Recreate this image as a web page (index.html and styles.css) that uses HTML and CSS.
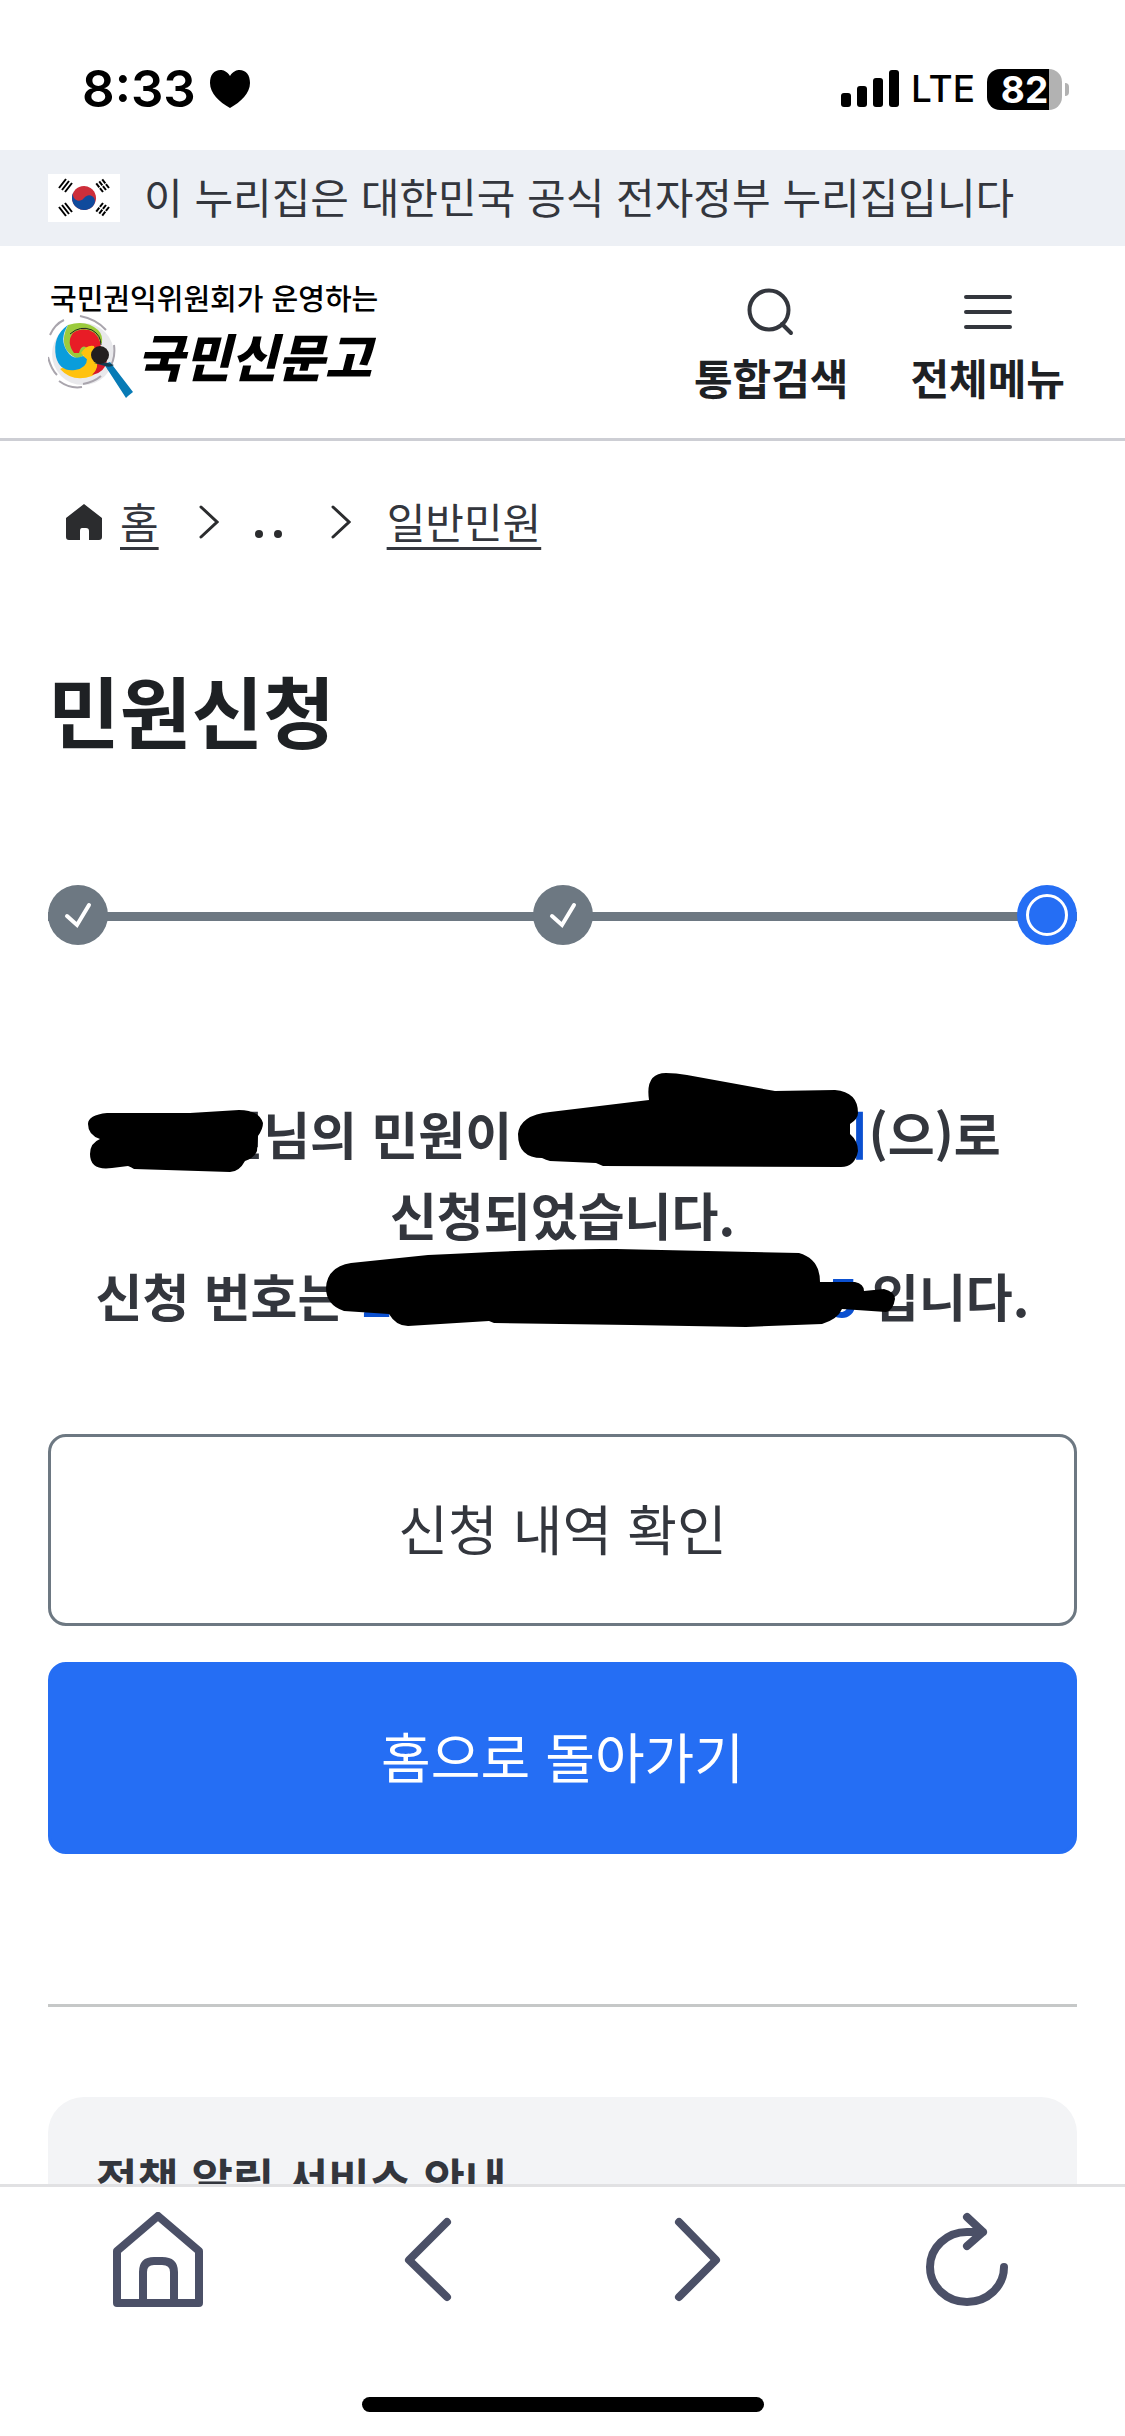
FILE: index.html
```html
<!DOCTYPE html>
<html lang="ko">
<head>
  <meta charset="utf-8">
  <meta name="viewport" content="width=device-width, initial-scale=1">
  <title>민원신청</title>
  <link rel="stylesheet" href="styles.css">
</head>
<body>
  <div class="status">
    <div class="status-left">
      <span class="time">8:33</span>
      <svg width="40" height="38" viewBox="0 0 40 38"><path d="M20 6C17 1 13 0 10.500 0C4 0 0 5 0 13C0 23 9 32 20 38C31 32 40 23 40 13C40 5 36 0 29.500 0C27 0 23 1 20 6Z"/></svg>
    </div>
    <div class="status-right">
      <svg width="58" height="38" viewBox="0 0 58 38">
        <rect x="0" y="23" width="10" height="14" rx="3"/>
        <rect x="16" y="16" width="10" height="21" rx="3"/>
        <rect x="32" y="8" width="10" height="29" rx="3"/>
        <rect x="48" y="0" width="10" height="37" rx="3"/>
      </svg>
      <span class="network">LTE</span>
      <div class="battery"><span>82</span></div>
    </div>
  </div>

  <div class="gov-banner">
    <svg width="72" height="48" viewBox="0 0 72 48">
      <rect width="72" height="48" fill="#fff"/>
      <g transform="rotate(33 36 24)">
        <circle cx="36" cy="24" r="12" fill="#cd2e3a"/>
        <path d="M24 24a6 6 0 0 0 12 0a6 6 0 0 1 12 0a12 12 0 0 1 -24 0Z" fill="#0f4a9c"/>
      </g>
      <g stroke="#000" stroke-width="2">
        <path d="M11 14L18 5M14 16L21 7M17 18L24 9"/>
        <path d="M61 14L54 5M58 16L51 7M55 18L48 9" stroke-dasharray="5 1"/>
        <path d="M11 33L18 42M14 31L21 40M17 29L24 38"/>
        <path d="M61 33L54 42M58 31L51 40M55 29L48 38" stroke-dasharray="5 1"/>
      </g>
    </svg>
    <span>이 누리집은 대한민국 공식 전자정부 누리집입니다</span>
  </div>

  <header class="header">
    <a class="logo" href="#">
      <span class="logo-sub">국민권익위원회가 운영하는</span>
      <span class="logo-main">
        <svg width="86" height="86" viewBox="0 0 86 86">
          <circle cx="35" cy="39" r="31" fill="#e9e9ec"/>
          <g fill="none" stroke="#a9a5ad" stroke-width="2">
            <path d="M32 1Q48 4 58 15M2 20Q7 9 16 5M0 42Q3 54 9 60M11 66Q22 74 34 72M66 30Q68 45 60 55M35 69Q46 67 53 61"/>
          </g>
          <path d="M12 54Q25 68 44 61Q50 58 50 48L44 34L32 44Z" fill="#ffc20e"/>
          <path d="M44 60Q58 57 59 44L48 42Q52 53 44 60Z" fill="#d7182a"/>
          <path d="M20 10Q38 4 50 15Q55 20 54 28L30 44Q8 34 20 10Z" fill="#9bcb3c"/>
          <path d="M20 10Q4 21 8 42Q12 57 27 55Q39 53 39 44L35 41Q25 46 19 36Q11 24 20 10Z" fill="#0a9ddb"/>
          <path d="M26 38Q18 27 25 18Q31 13 41 15Q52 19 53 33L42 36Q34 26 31 38Z" fill="#e81c26"/>
          <path d="M33 38Q39 29 46 31L50 48Q42 52 39 44Z" fill="#ffc20e"/>
          <path d="M22 19Q32 10 44 15Q53 20 53 30" fill="none" stroke="#222" stroke-width="1"/>
          <path d="M56 49L62 47L85 77L80 81L78 83Z" fill="#087bb6"/>
          <path d="M46 48Q54 45 66 50Q62 53 57 51Z" fill="#123c52"/>
          <circle cx="52" cy="40" r="9" fill="#231f20"/>
        </svg>
        <span class="logo-name">국민신문고</span>
      </span>
    </a>
    <nav class="header-menu">
      <button type="button">
        <svg width="48" height="48" viewBox="0 0 48 48"><circle cx="22" cy="22" r="19.500"/><path d="M35 36L44 45"/></svg>
        통합검색
      </button>
      <button type="button">
        <svg width="48" height="48" viewBox="0 0 48 48"><path d="M2 9H46M2 24H46M2 39H46"/></svg>
        전체메뉴
      </button>
    </nav>
  </header>

  <main class="content">
    <nav class="breadcrumb">
      <svg class="home" width="36" height="36" viewBox="0 0 36 36"><path d="M18 0L36 14V33Q36 36 33 36H23V27Q23 24 20 24H16Q14 24 14 27V36H3Q0 36 0 33V14Z"/></svg>
      <a href="#">홈</a>
      <svg class="arrow" width="20" height="34" viewBox="0 0 20 34"><path d="M2 2L18 17L2 32"/></svg>
      <svg class="dots" width="28" height="34" viewBox="0 0 28 34"><circle cx="4" cy="29" r="4"/><circle cx="23" cy="29" r="4"/></svg>
      <svg class="arrow" width="20" height="34" viewBox="0 0 20 34"><path d="M2 2L18 17L2 32"/></svg>
      <a href="#">일반민원</a>
    </nav>

    <h1>민원신청</h1>

    <ol class="steps">
      <li class="done"><svg width="60" height="60" viewBox="0 0 60 60"><path d="M19 31L29 40L41 20"/></svg></li>
      <li class="done"><svg width="60" height="60" viewBox="0 0 60 60"><path d="M19 31L29 40L41 20"/></svg></li>
      <li class="current"><svg width="60" height="60" viewBox="0 0 60 60"><circle cx="30" cy="30" r="19.500"/></svg></li>
    </ol>

    <div class="message">
      <p>
        <span class="masked name">선<svg width="139" height="81" viewBox="0 0 139 81"><path d="M-17 16H66L115 13Q135 13 139 26Q139 32 134 39L133 54Q131 60 121 64Q115 75 106 75L10 72Q7 70 4 69L-12 71Q-34 74 -34 57Q-34 46 -24 42Q-36 38 -36 27Q-36 18 -17 16Z"/></svg></span><span>님의 민원이&nbsp;</span><span class="masked agency">기<svg width="342" height="81" viewBox="0 0 342 81"><path d="M-8 37Q-6 18 24 15L123 3Q119 -24 140 -24Q150 -24 161 -22L249 -6L309 -7Q332 -5 332 16Q332 22 324 27V37Q332 44 332 54Q329 70 315 70L77 69L70 66L24 64Q20 63 16 61Q-8 61 -8 37Z"/></svg></span><span>(으)로</span>
      </p>
      <p>신청되었습니다.</p>
      <p>
        <span>신청 번호는&nbsp;</span><span class="masked number"><span>2</span><span>5</span><svg width="496" height="81" viewBox="0 0 496 81"><path d="M-36 29Q-35 8 -11 4L66 -4Q200 -11 254 -10L437 -6Q458 0 458 23L493 23Q502 25 502 32L522 30Q533 33 533 40Q531 52 524 53L480 50Q476 60 460 65L384 68L269 66L132 64L127 62L46 67Q34 67 27 55L-18 52Q-36 46 -36 29Z"/></svg></span><span>&nbsp;입니다.</span>
      </p>
    </div>

    <div class="actions">
      <button type="button" class="btn">신청 내역 확인</button>
      <button type="button" class="btn primary">홈으로 돌아가기</button>
    </div>

    <hr>

    <section class="notice">
      <h2>정책 알림 서비스 안내</h2>
    </section>
  </main>

  <footer class="toolbar">
    <div class="toolbar-buttons">
      <button type="button" aria-label="홈"><svg width="96" height="96" viewBox="0 0 96 96"><path d="M7 39L48 4L89 39V91H7ZM33 90V60Q33 49 44 49H52Q64 49 64 60V90"/></svg></button>
      <button type="button" aria-label="뒤로"><svg width="96" height="96" viewBox="0 0 96 96"><path d="M67 10L29 48L67 85"/></svg></button>
      <button type="button" aria-label="앞으로"><svg width="96" height="96" viewBox="0 0 96 96"><path d="M30 10L67 48L30 85"/></svg></button>
      <button type="button" aria-label="새로고침"><svg width="96" height="96" viewBox="0 0 96 96"><path d="M85 55A37 35 0 1 1 48 20H64M48 5L64 20L48 34"/></svg></button>
    </div>
    <div class="home-indicator"></div>
  </footer>
</body>
</html>
```
FILE: styles.css
```css
* {
  box-sizing: border-box;
}
body {
  margin: 0;
  height: 100vh;
  display: flex;
  flex-direction: column;
  background: #fff;
  color: #33363d;
  font-family: "Noto Sans CJK KR", sans-serif;
  font-size: 42px;
  overflow: hidden;
}
svg {
  display: block;
  flex: none;
}
a {
  color: inherit;
}
button {
  font-family: inherit;
  color: inherit;
  background: none;
  border: none;
  padding: 0;
  cursor: pointer;
}

/* status bar */
.status {
  flex: none;
  height: 150px;
  padding: 28px 56px 0 82px;
  display: flex;
  align-items: center;
  justify-content: space-between;
  color: #000;
  font-family: Inter, sans-serif;
}
.status-left {
  display: flex;
  align-items: center;
  gap: 14px;
}
.time {
  font-size: 51px;
  line-height: 60px;
  font-weight: 600;
}
.status-right {
  display: flex;
  align-items: center;
  gap: 12px;
}
.network {
  font-size: 37px;
  line-height: 48px;
  font-weight: 500;
}
.battery {
  position: relative;
  width: 75px;
  height: 41px;
  margin-right: 7px;
  border-radius: 13px;
  background: linear-gradient(to right, #000 62px, #b2b2b2 62px);
  color: #fff;
  font-size: 37px;
  line-height: 41px;
  font-weight: 700;
  text-align: center;
}
.battery::after {
  content: "";
  position: absolute;
  right: -7px;
  top: 14px;
  width: 4px;
  height: 13px;
  border-radius: 0 4px 4px 0;
  background: #b2b2b2;
}

/* government banner */
.gov-banner {
  flex: none;
  height: 96px;
  padding: 0 48px;
  display: flex;
  align-items: center;
  gap: 24px;
  background: #edf0f5;
  white-space: nowrap;
}
.gov-banner span {
  padding-bottom: 6px;
}

/* header */
.header {
  flex: none;
  height: 195px;
  padding: 33px 60px 0 48px;
  display: flex;
  justify-content: space-between;
  border-bottom: 3px solid #cdced4;
}
.logo {
  display: flex;
  flex-direction: column;
  color: #000;
  text-decoration: none;
}
.logo-sub {
  padding-left: 2px;
  font-size: 29px;
  line-height: 36px;
  font-weight: 500;
}
.logo-main {
  display: flex;
}
.logo-name {
  padding-left: 3px;
  font-size: 51px;
  line-height: 81px;
  font-weight: 900;
  font-style: italic;
}
.header-menu {
  display: flex;
  gap: 62px;
  padding-top: 9px;
}
.header-menu button {
  display: flex;
  flex-direction: column;
  align-items: center;
  gap: 9px;
  color: #1e2124;
  font-size: 42px;
  line-height: 63px;
  font-weight: 700;
}
.header-menu svg {
  fill: none;
  stroke: #33363d;
  stroke-width: 4;
  stroke-linecap: round;
}

/* page */
.content {
  flex: 1;
  min-height: 0;
  padding: 48px 48px 0;
  overflow: hidden;
}
.breadcrumb {
  display: flex;
  align-items: center;
  padding-left: 18px;
  line-height: 63px;
}
.breadcrumb a {
  padding-bottom: 3px;
  text-decoration-thickness: 3px;
  text-underline-offset: 8px;
}
.breadcrumb .home {
  margin-right: 18px;
  fill: #2b2c2e;
}
.breadcrumb .arrow {
  margin: 0 36px 0 40px;
  fill: none;
  stroke: #2b2c2e;
  stroke-width: 3;
  stroke-linecap: round;
}
.breadcrumb .dots {
  margin-right: 8px;
  fill: #2b2c2e;
}
h1 {
  margin: 96px 0 0;
  color: #1e2124;
  font-size: 78px;
  line-height: 117px;
  font-weight: 700;
}

/* steps */
.steps {
  list-style: none;
  margin: 117px 0 0;
  padding: 0;
  display: flex;
  justify-content: space-between;
  background: linear-gradient(#6d7882, #6d7882) 0 27px / 100% 9px no-repeat;
}
.steps li {
  border-radius: 50%;
  background: #6d7882;
}
.steps .current {
  background: #256ef4;
}
.steps svg {
  fill: none;
  stroke: #fff;
  stroke-width: 4;
  stroke-linecap: round;
}
.steps .current svg {
  stroke-width: 3;
}

/* result message */
.message {
  margin-top: 148px;
  font-size: 51px;
  line-height: 81px;
  font-weight: 700;
}
.message p {
  margin: 0;
  display: flex;
  justify-content: center;
  white-space: nowrap;
}
.masked {
  position: relative;
  display: flex;
  justify-content: flex-end;
}
.masked svg {
  position: absolute;
  left: 0;
  top: 4px;
  overflow: visible;
  fill: #000;
}
.name {
  width: 139px;
}
.agency {
  width: 342px;
  color: #0b50d0;
}
.number {
  width: 496px;
  margin-left: 3px;
  justify-content: space-between;
  color: #0b50d0;
}

/* buttons */
.actions {
  margin-top: 98px;
  display: flex;
  flex-direction: column;
  gap: 36px;
}
.btn {
  height: 192px;
  padding-bottom: 6px;
  border: 3px solid #6d7882;
  border-radius: 18px;
  font-size: 54px;
}
.btn.primary {
  border-color: #256ef4;
  background: #256ef4;
  color: #fff;
}
hr {
  margin: 150px 0 90px;
  border: none;
  border-top: 3px solid #c6c8c8;
}
.notice {
  padding: 48px;
  border-radius: 36px;
  background: #f3f4f6;
}
.notice h2 {
  margin: 0;
  font-size: 45px;
  line-height: 66px;
  font-weight: 700;
}

/* browser toolbar */
.toolbar {
  flex: none;
  height: 252px;
  padding: 25px 23px 24px;
  display: flex;
  flex-direction: column;
  justify-content: space-between;
  border-top: 3px solid #e1e1e3;
  background: #fff;
}
.toolbar-buttons {
  display: grid;
  grid-template-columns: repeat(4, 1fr);
}
.toolbar button {
  display: flex;
  justify-content: center;
}
.toolbar svg {
  fill: none;
  stroke: #4b5067;
  stroke-width: 8;
  stroke-linecap: round;
  stroke-linejoin: round;
}
.home-indicator {
  align-self: center;
  width: 402px;
  height: 15px;
  border-radius: 8px;
  background: #000;
}
```
